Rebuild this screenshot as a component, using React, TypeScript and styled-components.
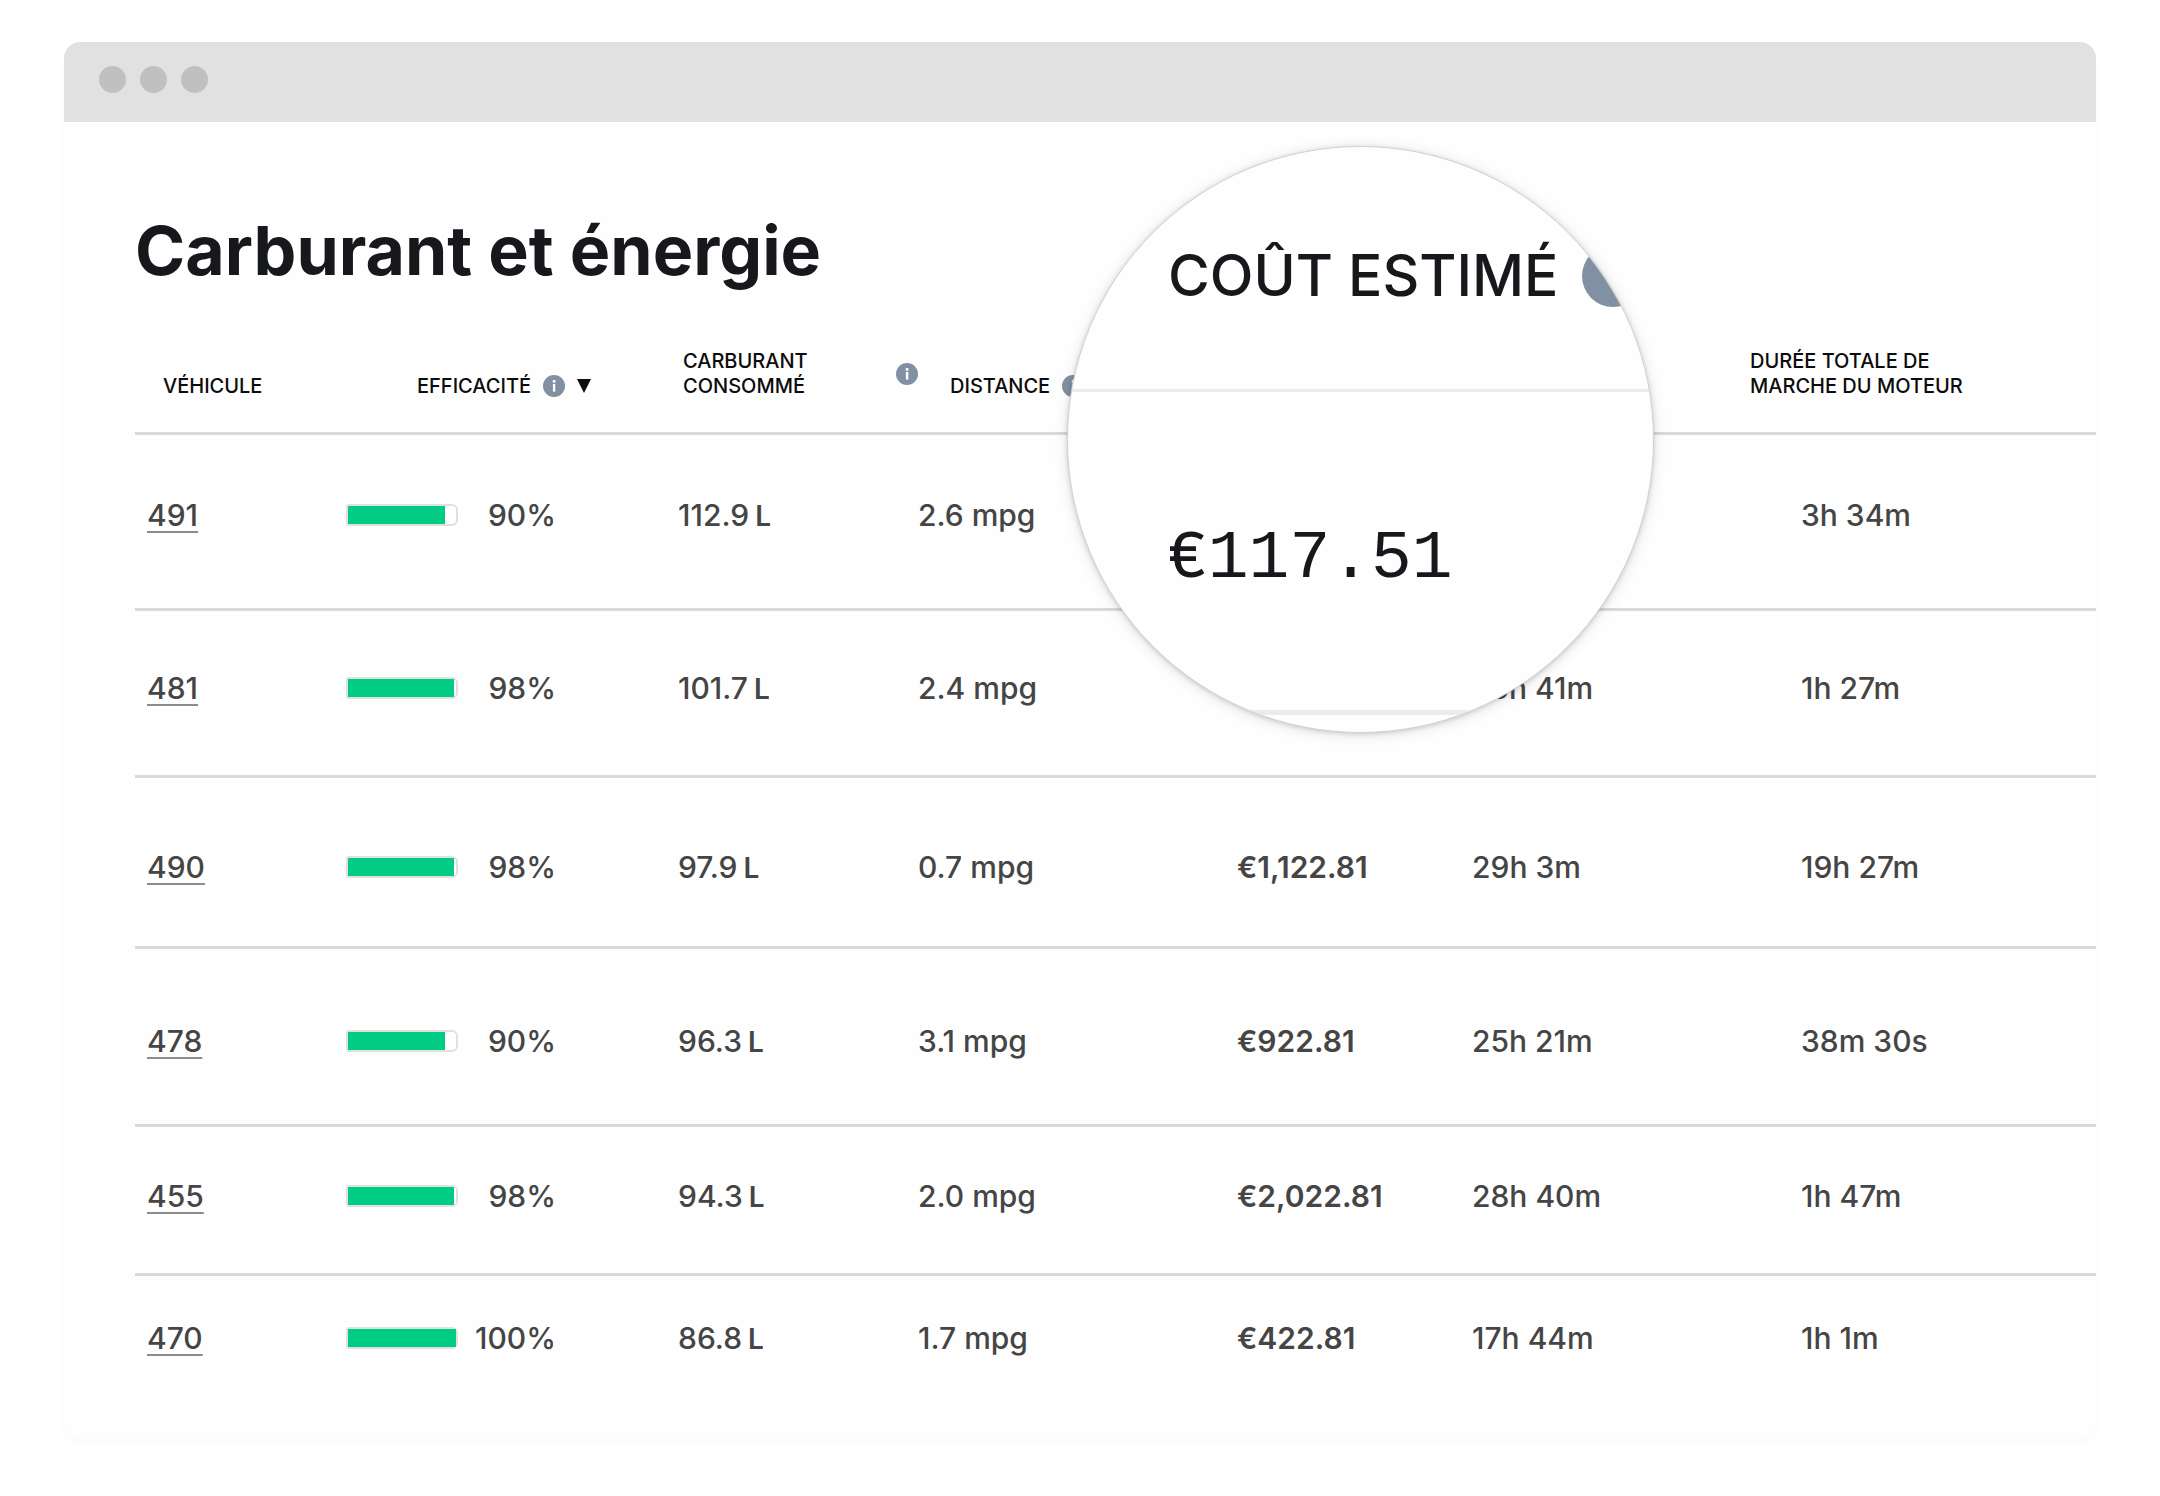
import React from "react";
import styled, { createGlobalStyle } from "styled-components";

const sans = `Inter, "Liberation Sans", Arial, sans-serif`;
const mono = `"Liberation Mono", "Courier New", monospace`;

const color = {
  ink: "#16181b",
  text: "#454545",
  head: "#0c0c0d",
  rule: "#d9d9d9",
  slate: "#8190a3",
  green: "#00cc83",
};

const GlobalStyle = createGlobalStyle`
  * { box-sizing: border-box; }
  body { margin: 0; background: #ffffff; font-family: ${sans}; color: ${color.text}; }
`;

const Page = styled.main`
  padding: 42px 64px 56px;
`;

const Window = styled.section`
  position: relative;
  border-radius: 16px;
  background: #fefefe;
  box-shadow: 0 6px 8px 0 rgba(0, 0, 0, 0.02);
`;

const TitleBar = styled.div`
  display: flex;
  align-items: center;
  gap: 14px;
  height: 80px;
  padding: 0 35px 6px;
  border-radius: 16px 16px 0 0;
  background: #e1e1e1;
`;

const Dot = styled.span`
  width: 27px;
  height: 27px;
  border-radius: 50%;
  background: #c0c0c0;
`;

const Report = styled.div`
  padding: 88px 0 0 71px;
`;

const Title = styled.h1`
  margin: 0;
  font-size: 68px;
  line-height: 80px;
  font-weight: 700;
  color: ${color.ink};
`;

const Table = styled.table`
  width: 100%;
  table-layout: fixed;
  border-collapse: collapse;
  font-size: 30px;
  line-height: 32px;
  font-weight: 500;
`;

const Col = styled.col<{ $w?: number }>`
  width: ${(p) => (p.$w ? `${p.$w}px` : "auto")};
`;

const HeadCell = styled.th<{ $indent: number }>`
  height: 143px;
  padding: 0 0 33px ${(p) => p.$indent}px;
  vertical-align: bottom;
  border-bottom: 3px solid ${color.rule};
  text-align: left;
  font-size: 20px;
  line-height: 25px;
  font-weight: 500;
  color: ${color.head};
`;

const HeadContent = styled.div<{ $spread?: boolean }>`
  display: flex;
  align-items: center;
  justify-content: ${(p) => (p.$spread ? "space-between" : "flex-start")};
  gap: 12px;
`;

const SortButton = styled.button`
  display: flex;
  align-items: center;
  padding: 0;
  border: 0;
  background: none;
  color: inherit;
  cursor: pointer;
`;

const Row = styled.tr<{ $top: number; $bottom: number }>`
  td {
    padding-top: ${(p) => p.$top}px;
    padding-bottom: ${(p) => p.$bottom}px;
    border-bottom: 3px solid ${color.rule};
  }
  &:last-child td {
    border-bottom: 0;
  }
`;

const Cell = styled.td<{ $indent?: number }>`
  padding: 0 0 0 ${(p) => p.$indent ?? 0}px;
  vertical-align: top;
  white-space: nowrap;
`;

const VehicleLink = styled.a`
  color: inherit;
  text-decoration: underline 2px #8c8c8c;
  text-underline-offset: 5px;
  text-decoration-skip-ink: none;
`;

const Efficiency = styled.div`
  display: flex;
  align-items: center;
  justify-content: space-between;
  width: 210px;
`;

const Track = styled.div`
  width: 112px;
  height: 22px;
  border: 2px solid #e0e0e0;
  border-radius: 3px 6px 6px 3px;
  background: #ffffff;
`;

const Fill = styled.div`
  height: 100%;
  background: ${color.green};
`;

const Unit = styled.span`
  margin-left: 6px;
  font-size: 28px;
  font-weight: 600;
`;

const Cost = styled.span`
  font-weight: 600;
`;

const Lens = styled.aside`
  position: absolute;
  top: 104px;
  left: 1003px;
  width: 587px;
  height: 587px;
  overflow: hidden;
  border-radius: 50%;
  border: 1px solid #d2d2d2;
  background: #fefefe;
  box-shadow: 0 2px 14px rgba(0, 0, 0, 0.12), 0 1px 4px rgba(0, 0, 0, 0.14);
`;

const LensHead = styled.div`
  display: flex;
  align-items: center;
  gap: 24px;
  height: 245px;
  padding: 16px 0 0 100px;
  border-bottom: 3px solid #e9ebed;
  font-size: 57px;
  line-height: 64px;
  font-weight: 500;
  white-space: nowrap;
  color: ${color.ink};
`;

const LensDisc = styled.span`
  flex: none;
  width: 62px;
  height: 62px;
  border-radius: 50%;
  background: ${color.slate};
`;

const LensBody = styled.div`
  display: flex;
  align-items: center;
  height: 323px;
  padding: 16px 0 0 99px;
  border-bottom: 5px solid #e9ebed;
  font-family: ${mono};
  font-size: 68px;
  line-height: 80px;
  color: ${color.ink};
`;

const InfoSvg = styled.svg`
  flex: none;
  width: 22px;
  height: 22px;
`;

function InfoIcon() {
  return (
    <InfoSvg viewBox="0 0 22 22" role="img" aria-label="Info">
      <circle cx="11" cy="11" r="11" fill={color.slate} />
      <rect x="9.8" y="5" width="2.6" height="2.8" rx="0.6" fill="#fff" />
      <rect x="9.9" y="9" width="2.4" height="7.6" fill="#fff" />
    </InfoSvg>
  );
}

function SortArrow() {
  return (
    <svg width="14" height="14" viewBox="0 0 14 14" aria-hidden="true">
      <path d="M0 0H14L7 14Z" fill={color.head} />
    </svg>
  );
}

interface Vehicle {
  id: string;
  efficiency: number;
  fuel: string;
  distance: string;
  cost?: string;
  drive?: string;
  engine: string;
  top: number;
  bottom: number;
}

const vehicles: Vehicle[] = [
  { id: "491", efficiency: 90, fuel: "112.9", distance: "2.6 mpg", engine: "3h 34m", top: 64, bottom: 76 },
  { id: "481", efficiency: 98, fuel: "101.7", distance: "2.4 mpg", drive: "25h 41m", engine: "1h 27m", top: 61, bottom: 70 },
  { id: "490", efficiency: 98, fuel: "97.9", distance: "0.7 mpg", cost: "€1,122.81", drive: "29h 3m", engine: "19h 27m", top: 73, bottom: 62 },
  { id: "478", efficiency: 90, fuel: "96.3", distance: "3.1 mpg", cost: "€922.81", drive: "25h 21m", engine: "38m 30s", top: 76, bottom: 66 },
  { id: "455", efficiency: 98, fuel: "94.3", distance: "2.0 mpg", cost: "€2,022.81", drive: "28h 40m", engine: "1h 47m", top: 53, bottom: 60 },
  { id: "470", efficiency: 100, fuel: "86.8", distance: "1.7 mpg", cost: "€422.81", drive: "17h 44m", engine: "1h 1m", top: 46, bottom: 84 },
];

export default function App() {
  return (
    <>
      <GlobalStyle />
      <Page>
        <Window>
          <TitleBar>
            <Dot />
            <Dot />
            <Dot />
          </TitleBar>
          <Report>
            <Title>Carburant et énergie</Title>
            <Table>
              <colgroup>
                <Col $w={211} />
                <Col $w={332} />
                <Col $w={240} />
                <Col $w={319} />
                <Col $w={235} />
                <Col $w={278} />
                <Col />
              </colgroup>
              <thead>
                <tr>
                  <HeadCell $indent={28}>VÉHICULE</HeadCell>
                  <HeadCell $indent={71}>
                    <HeadContent>
                      EFFICACITÉ
                      <InfoIcon />
                      <SortButton aria-label="Trier">
                        <SortArrow />
                      </SortButton>
                    </HeadContent>
                  </HeadCell>
                  <HeadCell $indent={5}>
                    <HeadContent $spread>
                      <span>
                        CARBURANT
                        <br />
                        CONSOMMÉ
                      </span>
                      <InfoIcon />
                    </HeadContent>
                  </HeadCell>
                  <HeadCell $indent={32}>
                    <HeadContent>
                      DISTANCE
                      <InfoIcon />
                    </HeadContent>
                  </HeadCell>
                  <HeadCell $indent={0} />
                  <HeadCell $indent={0} />
                  <HeadCell $indent={0}>
                    DURÉE TOTALE DE
                    <br />
                    MARCHE DU MOTEUR
                  </HeadCell>
                </tr>
              </thead>
              <tbody>
                {vehicles.map((v) => (
                  <Row key={v.id} $top={v.top} $bottom={v.bottom}>
                    <Cell $indent={12}>
                      <VehicleLink href={`#${v.id}`}>{v.id}</VehicleLink>
                    </Cell>
                    <Cell>
                      <Efficiency>
                        <Track>
                          <Fill style={{ width: `${v.efficiency}%` }} />
                        </Track>
                        {v.efficiency}%
                      </Efficiency>
                    </Cell>
                    <Cell>
                      {v.fuel}
                      <Unit>L</Unit>
                    </Cell>
                    <Cell>{v.distance}</Cell>
                    <Cell>
                      <Cost>{v.cost}</Cost>
                    </Cell>
                    <Cell>{v.drive}</Cell>
                    <Cell $indent={51}>{v.engine}</Cell>
                  </Row>
                ))}
              </tbody>
            </Table>
          </Report>
          <Lens>
            <LensHead>
              COÛT ESTIMÉ
              <LensDisc />
            </LensHead>
            <LensBody>€117.51</LensBody>
          </Lens>
        </Window>
      </Page>
    </>
  );
}
